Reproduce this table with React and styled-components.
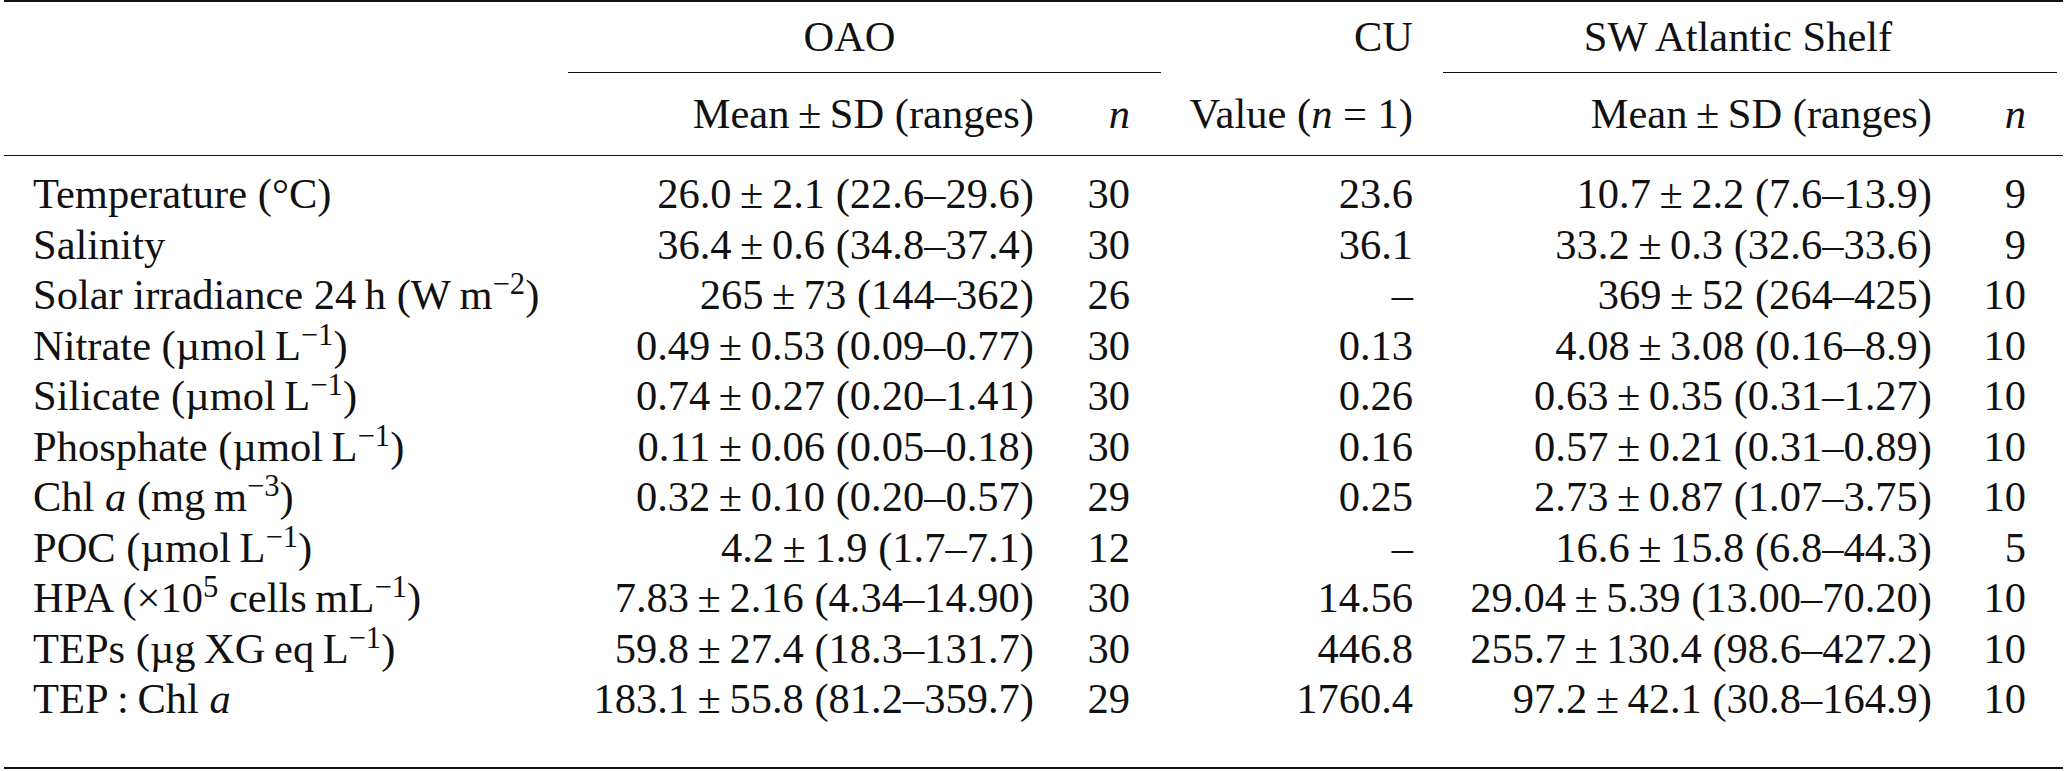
import React from 'react';
import styled, {createGlobalStyle} from 'styled-components';

const GlobalStyle = createGlobalStyle`
    html, body {
        margin: 0;
        padding: 0;
        background: #ffffff;
    }
    body {
        font-family: "Liberation Serif", "Times New Roman", serif;
        color: #111111;
    }
`

const Wrapper = styled.div`
    width: 2067px;
    padding: 0 4px;
    box-sizing: border-box;
`

const Table = styled.table`
    width: 2059px;
    table-layout: fixed;
    border-collapse: collapse;
    font-size: 42.5px;
    border-top: 2px solid #111;
    border-bottom: 2px solid #111;
`

const Col = styled.col`
    width: ${props => props.$w}px;
`

const GroupCell = styled.th`
    padding: 0;
    font-weight: normal;
    vertical-align: top;
    text-align: ${props => props.$align || 'center'};
`

const GroupLabel = styled.div`
    height: 70px;
    line-height: 70px;
    padding-right: ${props => props.$pr || 0}px;
`

const GroupRule = styled.div`
    height: 0;
    border-bottom: 1.5px solid #111;
    margin-right: ${props => props.$mr || 0}px;
`

const SubHeadRow = styled.tr`
    border-bottom: 1.5px solid #111;
`

const SubHead = styled.th`
    height: 82px;
    line-height: 82px;
    padding: 0 ${props => props.$pr || 0}px 0 0;
    font-weight: normal;
    text-align: right;
    white-space: nowrap;
`

const Row = styled.tr`
    &:first-child td {
        padding-top: 13px;
    }
    &:last-child td {
        padding-bottom: 42px;
    }
`

const Cell = styled.td`
    line-height: 50.5px;
    padding: 0 ${props => props.$pr || 0}px 0 ${props => props.$pl || 0}px;
    text-align: ${props => props.$align || 'right'};
    white-space: nowrap;
`

const Var = styled.i`
    font-style: italic;
`

const Sup = styled.sup`
    font-size: 0.72em;
    line-height: 0;
    vertical-align: 0.5em;
`

const Pm = styled.span`
    margin: 0 0.2em;
`

const Pmv = ({a, b, r}) => (
    <>{a}<Pm>±</Pm>{b} ({r})</>
)

const cols = [564, 482, 111, 282, 505, 115]

const rows = [
    [<>Temperature (°C)</>, ['26.0', '2.1', '22.6–29.6'], '30', '23.6', ['10.7', '2.2', '7.6–13.9'], '9'],
    [<>Salinity</>, ['36.4', '0.6', '34.8–37.4'], '30', '36.1', ['33.2', '0.3', '32.6–33.6'], '9'],
    [<>Solar irradiance 24&#8201;h (W&#8201;m<Sup>−2</Sup>)</>, ['265', '73', '144–362'], '26', '–', ['369', '52', '264–425'], '10'],
    [<>Nitrate (µmol&#8201;L<Sup>−1</Sup>)</>, ['0.49', '0.53', '0.09–0.77'], '30', '0.13', ['4.08', '3.08', '0.16–8.9'], '10'],
    [<>Silicate (µmol&#8201;L<Sup>−1</Sup>)</>, ['0.74', '0.27', '0.20–1.41'], '30', '0.26', ['0.63', '0.35', '0.31–1.27'], '10'],
    [<>Phosphate (µmol&#8201;L<Sup>−1</Sup>)</>, ['0.11', '0.06', '0.05–0.18'], '30', '0.16', ['0.57', '0.21', '0.31–0.89'], '10'],
    [<>Chl <Var>a</Var> (mg&#8201;m<Sup>−3</Sup>)</>, ['0.32', '0.10', '0.20–0.57'], '29', '0.25', ['2.73', '0.87', '1.07–3.75'], '10'],
    [<>POC (µmol&#8201;L<Sup>−1</Sup>)</>, ['4.2', '1.9', '1.7–7.1'], '12', '–', ['16.6', '15.8', '6.8–44.3'], '5'],
    [<>HPA (×10<Sup>5</Sup> cells&#8201;mL<Sup>−1</Sup>)</>, ['7.83', '2.16', '4.34–14.90'], '30', '14.56', ['29.04', '5.39', '13.00–70.20'], '10'],
    [<>TEPs (µg&#8201;XG&#8201;eq&#8201;L<Sup>−1</Sup>)</>, ['59.8', '27.4', '18.3–131.7'], '30', '446.8', ['255.7', '130.4', '98.6–427.2'], '10'],
    [<>TEP&#8201;:&#8201;Chl <Var>a</Var></>, ['183.1', '55.8', '81.2–359.7'], '29', '1760.4', ['97.2', '42.1', '30.8–164.9'], '10'],
]

const App = () => {
    return (
        <>
            <GlobalStyle/>
            <Wrapper>
                <Table>
                    <colgroup>
                        {cols.map((w, i) => <Col key={i} $w={w}/>)}
                    </colgroup>
                    <thead>
                        <tr>
                            <GroupCell/>
                            <GroupCell colSpan={2}>
                                <GroupLabel $pr={30}>OAO</GroupLabel>
                                <GroupRule/>
                            </GroupCell>
                            <GroupCell $align="right">
                                <GroupLabel $pr={30}>CU</GroupLabel>
                            </GroupCell>
                            <GroupCell colSpan={2}>
                                <GroupLabel $pr={30}>SW Atlantic Shelf</GroupLabel>
                                <GroupRule $mr={6}/>
                            </GroupCell>
                        </tr>
                        <SubHeadRow>
                            <SubHead/>
                            <SubHead $pr={16}>Mean<Pm>±</Pm>SD (ranges)</SubHead>
                            <SubHead $pr={31}><Var>n</Var></SubHead>
                            <SubHead $pr={30}>Value (<Var>n</Var> = 1)</SubHead>
                            <SubHead $pr={16}>Mean<Pm>±</Pm>SD (ranges)</SubHead>
                            <SubHead $pr={37}><Var>n</Var></SubHead>
                        </SubHeadRow>
                    </thead>
                    <tbody>
                        {rows.map((r, i) => (
                            <Row key={i}>
                                <Cell $align="left" $pl={29}>{r[0]}</Cell>
                                <Cell $pr={16}><Pmv a={r[1][0]} b={r[1][1]} r={r[1][2]}/></Cell>
                                <Cell $pr={31}>{r[2]}</Cell>
                                <Cell $pr={30}>{r[3]}</Cell>
                                <Cell $pr={16}><Pmv a={r[4][0]} b={r[4][1]} r={r[4][2]}/></Cell>
                                <Cell $pr={37}>{r[5]}</Cell>
                            </Row>
                        ))}
                    </tbody>
                </Table>
            </Wrapper>
        </>
    )
}

export default App;
